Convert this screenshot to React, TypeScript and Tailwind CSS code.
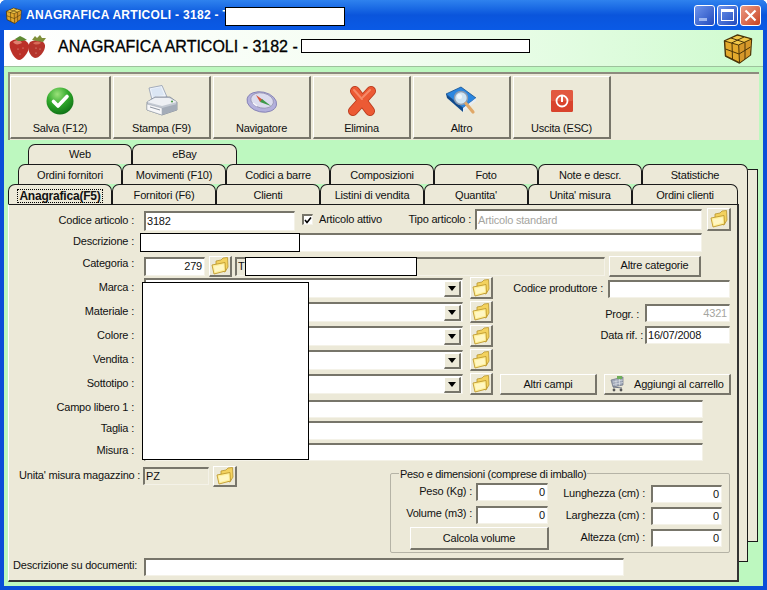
import React from "react";

const raised = "bg-[#ece9d8] border-t border-l border-t-white border-l-white border-r-2 border-b-2 border-r-[#77756a] border-b-[#77756a]";
const sunken = "border-t-2 border-l-2 border-t-[#77756a] border-l-[#77756a] border-b border-r border-b-[#f4f2e8] border-r-[#f4f2e8]";

function Folder({ size = 18 }: { size?: number }) {
  return (
    <svg width={size} height={size} viewBox="0 0 18 18">
      <path d="M5 6 L5 4 L10 3 L12 1 L16.5 0.5 L17 10 L14 15 L5 12 Z" fill="#f3d25e" stroke="#b8952e" strokeWidth="0.8" strokeLinejoin="round" />
      <path d="M1 8 L14 5.5 L14.5 14 L3 17 Z" fill="#fff09a" stroke="#c09a2c" strokeWidth="0.9" strokeLinejoin="round" />
      <path d="M3 9.5 L12.5 7.5 L13 12.5 L4 15 Z" fill="#fff7c4" />
    </svg>
  );
}

function FolderBtn({ w = "w-[23px]", h = "h-[22px]" }: { w?: string; h?: string }) {
  return (
    <button className={`${raised} ${w} ${h} flex items-center justify-center shrink-0`}>
      <Folder />
    </button>
  );
}

function Redact({ className }: { className: string }) {
  return <div className={`absolute bg-white border border-black z-10 ${className}`} />;
}

function Label({ children, w, cls = "pb-[2px]" }: { children: React.ReactNode; w: string; cls?: string }) {
  return <div className={`${w} ${cls} text-right whitespace-nowrap shrink-0`}>{children}</div>;
}

function Field({ className, text, cls = "" }: { className: string; text?: string; cls?: string }) {
  return <div className={`${sunken} bg-white flex items-center px-[1px] overflow-hidden leading-none shrink-0 ${className} ${cls}`}>{text}</div>;
}

function Combo({ label, mt }: { label: string; mt: string }) {
  return (
    <div className={`flex items-center h-[20px] ${mt}`}>
      <Label w="w-[125px]">{label}</Label>
      <div className={`${sunken} bg-white w-[319px] h-[20px] ml-[10px] flex items-center justify-end pr-[1px]`}>
        <div className={`${raised} w-[17px] h-[16px] flex items-center justify-center`}>
          <svg width="8" height="5" viewBox="0 0 8 5"><path d="M0 0H8L4 5Z" fill="#000" /></svg>
        </div>
      </div>
      <div className="ml-[7px]"><FolderBtn h="h-[22px]" /></div>
    </div>
  );
}

function ToolButton({ label, w, children }: { label: string; w: string; children: React.ReactNode }) {
  return (
    <button className={`${raised} ${w} h-[63px] flex flex-col items-center shrink-0`}>
      <div className="h-[44px] flex items-center justify-center pt-[3px]">{children}</div>
      <div className="leading-none mt-[2px]">{label}</div>
    </button>
  );
}

function Tab({ children, w, active, low }: { children: React.ReactNode; w: string; active?: boolean; low?: boolean }) {
  return (
    <div className={`${w} h-[20px] shrink-0 bg-[#ece9d8] border-t border-l border-r border-[#1a1a1a] rounded-t-[7px] flex items-center justify-center whitespace-nowrap leading-none ${low ? "pt-[2px]" : ""} ${active ? "font-bold text-[12px]" : ""}`}>
      {active ? <span className="outline-1 outline-dotted outline-black px-[1px]">{children}</span> : children}
    </div>
  );
}

function NumField({ className }: { className: string }) {
  return <Field className={`${className} justify-end pr-[2px]`} text="0" />;
}

function Check() {
  return (
    <svg width="28" height="28" viewBox="0 0 28 28">
      <defs>
        <radialGradient id="g1" cx="0.4" cy="0.25" r="0.8">
          <stop offset="0" stopColor="#9be27a" />
          <stop offset="0.5" stopColor="#2fa82a" />
          <stop offset="1" stopColor="#0c6d14" />
        </radialGradient>
      </defs>
      <circle cx="14" cy="14" r="13.5" fill="url(#g1)" />
      <path d="M7.5 14.5 L12 19 L21 9.5" fill="none" stroke="#fff" strokeWidth="3.6" strokeLinecap="round" strokeLinejoin="round" />
    </svg>
  );
}

function Printer() {
  return (
    <svg width="32" height="32" viewBox="0 0 32 32">
      <path d="M6 15 L3 3 L16 0.5 L21 12 Z" fill="#eef3fa" stroke="#8f9bb0" strokeWidth="0.8" />
      <path d="M7 12 L5 4 L15 2 L18 10 Z" fill="#dbe6f4" />
      <path d="M1 17 L9 12 L24 12 L31 17 L31 25 L16 30 L1 25 Z" fill="#c3c9d2" stroke="#7e8796" strokeWidth="0.8" />
      <path d="M1 17 L16 21 L31 17 L23 13 L9 13 Z" fill="#eef0f4" />
      <path d="M1 19 L16 23 L16 30 L1 25 Z" fill="#f7f7f9" stroke="#9aa2ad" strokeWidth="0.5" />
      <path d="M16 23 L31 19 L31 25 L16 30 Z" fill="#a4acb8" />
      <path d="M4 22 L14 25" stroke="#8c949f" strokeWidth="1" />
      <circle cx="26" cy="16.5" r="1.1" fill="#4f9a4a" />
    </svg>
  );
}

function Compass() {
  return (
    <svg width="32" height="24" viewBox="0 0 32 24">
      <g transform="rotate(12 16 12)">
        <ellipse cx="16" cy="13" rx="15" ry="10" fill="#b3b0dc" stroke="#7d7ab0" strokeWidth="0.8" />
        <ellipse cx="16" cy="11.5" rx="11.5" ry="7.5" fill="#dcdcee" stroke="#8e8caa" strokeWidth="0.7" />
      </g>
      <path d="M10 6 L17 11 L14 13 Z" fill="#d9533a" />
      <path d="M16 10 L25 17 L14 13 Z" fill="#3f9a4a" />
      <path d="M7 14 L11 17" stroke="#f6f6fb" strokeWidth="1.4" />
    </svg>
  );
}

function Cross() {
  return (
    <svg width="30" height="30" viewBox="0 0 30 30">
      <path d="M8 5 L23 25 M24 5 L6 25" stroke="#b8391c" strokeWidth="10" strokeLinecap="round" />
      <path d="M8 5 L23 25 M24 5 L6 25" stroke="#ec5a34" strokeWidth="8.4" strokeLinecap="round" />
      <path d="M7 4 L15 13 M23 4 L16 11" stroke="#f68a68" strokeWidth="2" strokeLinecap="round" />
    </svg>
  );
}

function BookLens() {
  return (
    <svg width="34" height="30" viewBox="0 0 34 30">
      <path d="M1 8 L16 1 L31 12 L18 22 Z" fill="#2a86e0" stroke="#14508f" strokeWidth="0.8" />
      <path d="M1 8 L18 22 L18 26 L2 12 Z" fill="#0f4a8c" />
      <path d="M18 22 L31 12 L31 15 L18 26 Z" fill="#e6edf3" />
      <circle cx="16" cy="12" r="6.5" fill="#cfe4f2" stroke="#8b9bb0" strokeWidth="1.5" />
      <circle cx="14.5" cy="10.5" r="2.5" fill="#eef6fb" />
      <path d="M21 17.5 L28 26" stroke="#e0a868" strokeWidth="3.2" strokeLinecap="round" />
    </svg>
  );
}

function PowerIcon() {
  return (
    <svg width="22" height="22" viewBox="0 0 22 22">
      <rect x="0" y="0" width="22" height="22" rx="1.5" fill="#d9432c" />
      <rect x="0" y="0" width="22" height="11" rx="1.5" fill="#e8694f" opacity="0.6" />
      <circle cx="11" cy="11" r="5.5" fill="none" stroke="#fff" strokeWidth="1.8" />
      <rect x="10" y="6" width="2" height="6" fill="#fff" />
    </svg>
  );
}

function Berries() {
  return (
    <svg width="38" height="26" viewBox="0 0 38 26">
      <path d="M21 7 C28 3 37 6 36 12 C35 18 30 23 26 23 C21 22 17 13 21 7 Z" fill="#b5342b" />
      <path d="M1 7 C6 2 18 3 20 10 C21 16 14 25 10 25 C5 24 -1 13 1 7 Z" fill="#bb3028" />
      <path d="M4 7 C8 4 12 5 13 8 C9 10 6 10 4 7 Z" fill="#e08070" />
      <path d="M24 8 C27 6 30 6 32 8 C29 10 26 10 24 8 Z" fill="#d86a58" />
      <g fill="#e8b0a0">
        <circle cx="9" cy="14" r="0.6" /><circle cx="14" cy="13" r="0.6" /><circle cx="11" cy="19" r="0.6" /><circle cx="27" cy="13" r="0.6" /><circle cx="31" cy="14" r="0.6" /><circle cx="27" cy="18" r="0.6" />
      </g>
      <path d="M23 5 L26 1 L28 3 L31 0 L33 3 L37 3 L34 7 L28 6 Z" fill="#7f8f3a" />
      <path d="M6 4 L11 1 L15 3 L18 5 L13 6 L9 6 Z" fill="#5f8a34" />
    </svg>
  );
}

function Box({ size = 30 }: { size?: number }) {
  return (
    <svg width={size} height={size} viewBox="0 0 30 31">
      <path d="M2 8 L15 2 L29 6 L28 22 L17 30 L3 23 Z" fill="#e3a92c" stroke="#4a3408" strokeWidth="1.4" strokeLinejoin="round" />
      <path d="M2.7 8 L15 2.7 L28.3 6.3 L16 12 Z" fill="#f2c84a" />
      <path d="M16.5 12.5 L17 29.5 L27.5 22 L28.5 6.8 Z" fill="#d6982a" />
      <path d="M3 16 L16.5 21 L28 14 M8.5 5 L22 9.5 M21.5 4 L9 10 M9.5 10 L10 26.5 M22.5 9.5 L22.5 26 M2 8 L16 12 L29 6 M16.2 12 L17 30" fill="none" stroke="#4a3408" strokeWidth="1" />
    </svg>
  );
}

function Cart() {
  return (
    <svg width="16" height="16" viewBox="0 0 16 16" className="shrink-0">
      <path d="M2 4 L14 1 L14 9 L4 11 Z" fill="#9ea6b6" stroke="#6d7484" strokeWidth="0.7" />
      <path d="M4 6 L14 4 M4 8.5 L14 6.5 M7 3.5 L7 10 M10.5 2.5 L10.5 9.5" stroke="#e4e7ec" strokeWidth="0.6" />
      <path d="M4 11 L13 12" stroke="#6d7484" strokeWidth="1" />
      <circle cx="5" cy="14" r="1.4" fill="#555" />
      <circle cx="12" cy="14" r="1.4" fill="#555" />
      <rect x="8" y="0" width="5" height="3" fill="#6fae5a" />
    </svg>
  );
}

function WinBtn({ children, close }: { children: React.ReactNode; close?: boolean }) {
  return (
    <div className={`w-[21px] h-[21px] rounded-[3px] border border-white flex items-center justify-center shrink-0 ${close ? "bg-gradient-to-br from-[#ea9a82] to-[#c8401e]" : "bg-gradient-to-br from-[#6f95ec] to-[#2349bd]"}`}>
      {children}
    </div>
  );
}

export default function App() {
  return (
    <div className="relative w-[767px] h-[590px] overflow-hidden flex flex-col bg-[#0a4fd8] rounded-t-[6px] text-[11px] tracking-[-0.2px] text-[#111] font-['Liberation_Sans',Arial,sans-serif]">
      {/* title bar */}
      <div className="relative h-[30px] shrink-0 flex items-center pl-[5px] pr-[6px] bg-gradient-to-b from-[#2f82ee] via-[#0a55dc] to-[#0a5ae6]">
        <Box size={17} />
        <div className="ml-[4px] text-white font-bold text-[12px] whitespace-nowrap tracking-[0.3px]">ANAGRAFICA ARTICOLI - 3182 - T</div>
        <Redact className="left-[225px] top-[7px] w-[120px] h-[19px]" />
        <div className="ml-auto flex gap-[2px]">
          <WinBtn><div className="w-[8px] h-[3px] bg-[#9db6f0] mt-[9px] mr-[3px]" /></WinBtn>
          <WinBtn><div className="w-[13px] h-[12px] border border-white border-t-[3px]" /></WinBtn>
          <WinBtn close>
            <svg width="13" height="13" viewBox="0 0 13 13"><path d="M1.5 1.5 L11.5 11.5 M11.5 1.5 L1.5 11.5" stroke="#fff" strokeWidth="2.2" /></svg>
          </WinBtn>
        </div>
      </div>

      {/* client area */}
      <div className="relative h-[556px] mx-[4px] shrink-0 bg-[#bdf8bf]">
        {/* header */}
        <div className="relative h-[37px] flex items-center pl-[5px] pr-[10px] bg-gradient-to-r from-white via-[#f4fdf2] to-[#cffbcf] border-b border-b-[#9dc29c]">
          <Berries />
          <div className="ml-[11px] pb-[2px] text-[16px] tracking-normal text-black whitespace-nowrap [-webkit-text-stroke:0.3px_#000]">ANAGRAFICA ARTICOLI - 3182 -</div>
          <Redact className="left-[297px] top-[9px] w-[229px] h-[14px]" />
          <div className="ml-auto"><Box size={31} /></div>
        </div>

        {/* toolbar */}
        <div className="mt-[5px] ml-[4px] w-[751px] h-[68px] bg-[#ece9d8] border-t-2 border-l-2 border-t-[#8d8b7e] border-l-[#8d8b7e] flex gap-[2px] pl-[0px] pt-[2px]">
          <ToolButton label="Salva (F12)" w="w-[101px]"><Check /></ToolButton>
          <ToolButton label="Stampa (F9)" w="w-[98px]"><Printer /></ToolButton>
          <ToolButton label="Navigatore" w="w-[98px]"><Compass /></ToolButton>
          <ToolButton label="Elimina" w="w-[98px]"><Cross /></ToolButton>
          <ToolButton label="Altro" w="w-[98px]"><BookLens /></ToolButton>
          <ToolButton label="Uscita (ESC)" w="w-[98px]"><PowerIcon /></ToolButton>
        </div>

        {/* notebook */}
        <div className="relative mt-[4px] ml-[4px] w-[750px] h-[442px]">
          {/* page sheets behind the front page */}
          <div className="absolute left-[730px] top-[25px] w-[20px] h-[373px] bg-[#ece9d8] border-t border-r border-b border-[#1a1a1a]" />
          <div className="absolute left-[720px] top-[38px] w-[20px] h-[380px] bg-[#ece9d8] border-r border-b border-[#1a1a1a]" />

          <div className="relative flex ml-[20px]">
            <Tab w="w-[104px]">Web</Tab>
            <Tab w="w-[105px]">eBay</Tab>
          </div>
          <div className="relative flex ml-[10px]">
            <Tab low w="w-[104px]">Ordini fornitori</Tab>
            <Tab low w="w-[104px]">Movimenti (F10)</Tab>
            <Tab low w="w-[104px]">Codici a barre</Tab>
            <Tab low w="w-[104px]">Composizioni</Tab>
            <Tab low w="w-[104px]">Foto</Tab>
            <Tab low w="w-[104px]">Note e descr.</Tab>
            <Tab low w="w-[106px]">Statistiche</Tab>
          </div>
          <div className="relative flex">
            <Tab low w="w-[104px]" active>Anagrafica(F5)</Tab>
            <Tab low w="w-[104px]">Fornitori (F6)</Tab>
            <Tab low w="w-[104px]">Clienti</Tab>
            <Tab low w="w-[104px]">Listini di vendita</Tab>
            <Tab low w="w-[104px]">Quantita'</Tab>
            <Tab low w="w-[104px]">Unita' misura</Tab>
            <Tab low w="w-[106px]">Ordini clienti</Tab>
          </div>

          {/* front page */}
          <div className="relative w-[731px] h-[378px] bg-[#ece9d8] border-l border-r-2 border-b-2 border-t border-l-white border-t-[#1a1a1a] border-r-[#333] border-b-[#333] pt-[3px]">
            <Redact className="left-[133px] top-[77px] w-[167px] h-[178px]" />
            <Redact className="left-[131px] top-[28px] w-[160px] h-[19px]" />
            <Redact className="left-[236px] top-[52px] w-[172px] h-[19px]" />

            {/* codice articolo */}
            <div className="flex items-center h-[23px]">
              <Label w="w-[125px]" cls="pt-[1px]">Codice articolo :</Label>
              <Field className="w-[151px] h-[20px] ml-[10px] mt-[3px]" text="3182" />
              <div className={`${sunken} w-[11px] h-[11px] ml-[7px] bg-white flex items-center justify-center shrink-0`}>
                <svg width="8" height="8" viewBox="0 0 8 8"><path d="M1 4 L3 6.5 L7 1.5" fill="none" stroke="#000" strokeWidth="1.6" /></svg>
              </div>
              <div className="ml-[6px] w-[66px] whitespace-nowrap shrink-0">Articolo attivo</div>
              <Label w="w-[86px]" cls="pb-0">Tipo articolo :</Label>
              <Field className="w-[227px] h-[21px] ml-[4px]" text="Articolo standard" cls="text-[#a5a5a0]" />
              <div className="ml-[5px]"><FolderBtn w="w-[24px]" h="h-[23px]" /></div>
            </div>

            {/* descrizione */}
            <div className="flex items-center h-[19px] mt-[2px]">
              <Label w="w-[125px]">Descrizione :</Label>
              <Field className="w-[562px] h-[19px] ml-[6px]" />
            </div>

            {/* categoria */}
            <div className="flex items-center h-[22px] mt-[3px]">
              <Label w="w-[125px]" cls="pb-[6px]">Categoria :</Label>
              <Field className="w-[61px] h-[19px] ml-[10px] justify-end pr-[2px]" text="279" />
              <div className="ml-[4px]"><FolderBtn h="h-[21px]" /></div>
              <div className={`${sunken} w-[370px] h-[19px] ml-[3px] px-[1px] flex items-center leading-none`}>T</div>
              <button className={`${raised} w-[92px] h-[21px] ml-[4px] leading-none`}>Altre categorie</button>
            </div>

            {/* combos + right column */}
            <div className="flex h-[118px] mt-[1px]">
              <div className="flex flex-col">
                <Combo label="Marca :" mt="mt-0" />
                <Combo label="Materiale :" mt="mt-[4px]" />
                <Combo label="Colore :" mt="mt-[4px]" />
                <Combo label="Vendita :" mt="mt-[4px]" />
                <Combo label="Sottotipo :" mt="mt-[4px]" />
              </div>
              <div className="flex flex-col ml-[6px] w-[231px]">
                <div className="flex items-center justify-end h-[18px] mt-[2px]">
                  <div className="whitespace-nowrap pb-[2px]">Codice produttore :</div>
                  <Field className="w-[122px] h-[18px] ml-[5px]" />
                </div>
                <div className="flex items-center justify-end h-[18px] mt-[6px]">
                  <div className="whitespace-nowrap pt-[2px]">Progr. :</div>
                  <Field className="w-[85px] h-[18px] ml-[6px] justify-end pr-[2px] text-[#a5a5a0]" text="4321" />
                </div>
                <div className="flex items-center justify-end h-[18px] mt-[4px]">
                  <div className="whitespace-nowrap">Data rif. :</div>
                  <Field className="w-[85px] h-[18px] ml-[2px]" text="16/07/2008" />
                </div>
                <div className="flex mt-[30px] ml-[1px]">
                  <button className={`${raised} w-[97px] h-[21px] leading-none shrink-0`}>Altri campi</button>
                  <button className={`${raised} w-[127px] h-[21px] ml-[7px] flex items-center pl-[4px] leading-none shrink-0`}>
                    <Cart />
                    <span className="ml-[9px] whitespace-nowrap">Aggiungi al carrello</span>
                  </button>
                </div>
              </div>
            </div>

            {/* free fields */}
            <div className="flex items-center h-[18px] mt-[4px]">
              <Label w="w-[125px]" cls="pb-[4px]">Campo libero 1 :</Label>
              <Field className="w-[559px] h-[18px] ml-[10px]" />
            </div>
            <div className="flex items-center h-[19px] mt-[3px]">
              <Label w="w-[125px]" cls="pb-[5px]">Taglia :</Label>
              <Field className="w-[559px] h-[19px] ml-[10px]" />
            </div>
            <div className="flex items-center h-[18px] mt-[3px]">
              <Label w="w-[125px]" cls="pb-[4px]">Misura :</Label>
              <Field className="w-[559px] h-[18px] ml-[10px]" />
            </div>

            {/* unit + weights */}
            <div className="flex h-[87px] mt-[5px]">
              <div className="flex items-start h-[22px]">
                <div className="pl-[10px] whitespace-nowrap w-[134px] mt-[1px]">Unita' misura magazzino :</div>
                <Field className="w-[66px] h-[18px] mt-[1px]" text="PZ" cls="!bg-[#ece9d8]" />
                <div className="ml-[4px]"><FolderBtn w="w-[24px]" h="h-[21px]" /></div>
              </div>
              <div className="relative ml-[153px] mt-[7px] w-[340px] h-[80px] border border-[#b5b3a6] rounded-[2px] pt-[9px]">
                <div className="absolute left-[8px] -top-[7px] bg-[#ece9d8] px-[1px] leading-[14px] whitespace-nowrap tracking-[-0.3px]">Peso e dimensioni (comprese di imballo)</div>
                <div className="flex">
                  <div className="flex flex-col w-[157px]">
                    <div className="flex items-center h-[18px] justify-end">
                      <div className="whitespace-nowrap pb-[2px]">Peso (Kg) :</div>
                      <NumField className="w-[72px] h-[18px] ml-[4px]" />
                    </div>
                    <div className="flex items-center h-[18px] justify-end mt-[5px]">
                      <div className="whitespace-nowrap pb-[4px]">Volume (m3) :</div>
                      <NumField className="w-[72px] h-[18px] ml-[4px]" />
                    </div>
                    <button className={`${raised} self-end w-[139px] h-[23px] mt-[3px] -mr-[1px] leading-none`}>Calcola volume</button>
                  </div>
                  <div className="flex flex-col w-[174px] mt-[2px]">
                    <div className="flex items-center h-[18px] justify-end">
                      <div className="whitespace-nowrap pb-[2px]">Lunghezza (cm) :</div>
                      <NumField className="w-[71px] h-[18px] ml-[6px]" />
                    </div>
                    <div className="flex items-center h-[18px] justify-end mt-[4px]">
                      <div className="whitespace-nowrap pb-[2px]">Larghezza (cm) :</div>
                      <NumField className="w-[71px] h-[18px] ml-[6px]" />
                    </div>
                    <div className="flex items-center h-[18px] justify-end mt-[4px]">
                      <div className="whitespace-nowrap pb-[2px]">Altezza (cm) :</div>
                      <NumField className="w-[71px] h-[18px] ml-[6px]" />
                    </div>
                  </div>
                </div>
              </div>
            </div>

            {/* document description */}
            <div className="flex items-center h-[18px] mt-[5px]">
              <div className="pl-[4px] pb-[3px] w-[135px] whitespace-nowrap">Descrizione su documenti:</div>
              <Field className="w-[480px] h-[18px]" />
            </div>
          </div>
        </div>
      </div>
    </div>
  );
}
